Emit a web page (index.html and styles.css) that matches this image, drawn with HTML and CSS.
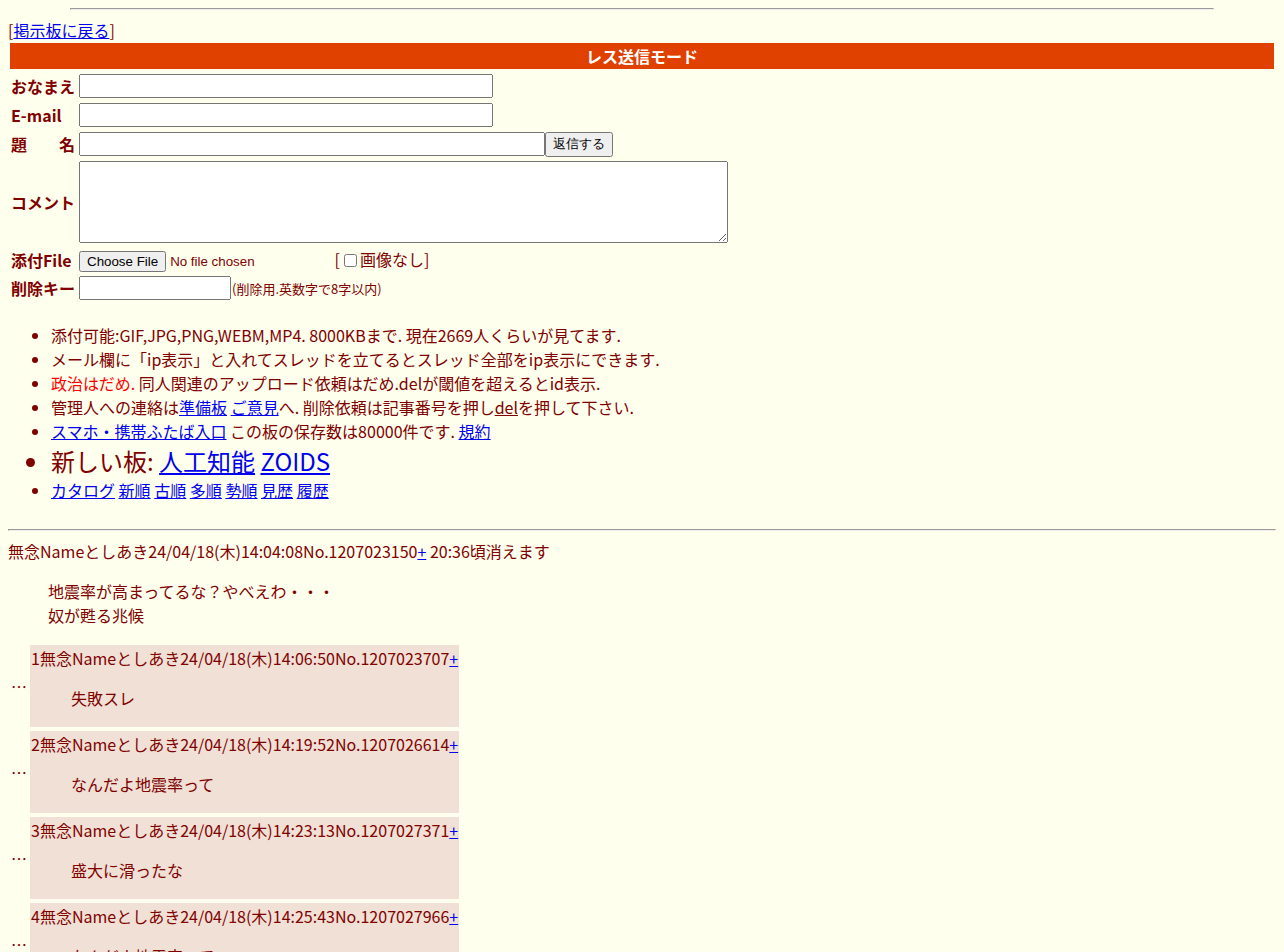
FILE: index.html
```html
<!DOCTYPE html>
<html lang="ja">
<head>
    <meta charset="UTF-8">
    <title>二次元裏＠ふたば</title>
    <link rel="stylesheet" href="styles.css">
</head>
<body>
    <hr class="top-rule">
    <div class="back">[<a href="#">掲示板に戻る</a>]</div>
    <div class="mode-bar">レス送信モード</div>

    <form class="post-form">
        <label class="lbl">おなまえ</label>
        <input type="text" class="txt name-in">

        <label class="lbl">E-mail</label>
        <input type="text" class="txt name-in">

        <label class="lbl">題　　名</label>
        <div class="sub-row">
            <input type="text" class="txt sub-in"><button type="button" class="send-btn">返信する</button>
        </div>

        <label class="lbl">コメント</label>
        <textarea class="com"></textarea>

        <label class="lbl">添付File</label>
        <div class="file-row">
            <input type="file" class="file-in"> [<input type="checkbox" class="noimg">画像なし]
        </div>

        <label class="lbl">削除キー</label>
        <div class="key-row">
            <input type="password" class="txt key-in"><span class="key-note">(削除用.英数字で8字以内)</span>
        </div>
    </form>

    <ul class="rules">
        <li>添付可能:GIF,JPG,PNG,WEBM,MP4. 8000KBまで. 現在2669人くらいが見てます.</li>
        <li>メール欄に「ip表示」と入れてスレッドを立てるとスレッド全部をip表示にできます.</li>
        <li><span class="warn">政治はだめ.</span> 同人関連のアップロード依頼はだめ.delが閾値を超えるとid表示.</li>
        <li>管理人への連絡は<a href="#">準備板</a> <a href="#">ご意見</a>へ. 削除依頼は記事番号を押し<u>del</u>を押して下さい.</li>
        <li><a href="#">スマホ・携帯ふたば入口</a> この板の保存数は80000件です. <a href="#">規約</a></li>
        <li class="big">新しい板: <a href="#">人工知能</a> <a href="#">ZOIDS</a></li>
        <li><a href="#">カタログ</a> <a href="#">新順</a> <a href="#">古順</a> <a href="#">多順</a> <a href="#">勢順</a> <a href="#">見歴</a> <a href="#">履歴</a></li>
    </ul>

    <hr class="sep">

    <div class="thread">
        <div class="post-head">無念Nameとしあき24/04/18(木)14:04:08No.1207023150<a href="#">+</a> 20:36頃消えます</div>
        <blockquote class="body">地震率が高まってるな？やべえわ・・・<br>奴が甦る兆候</blockquote>

        <div class="reply">
            <div class="dots">…</div>
            <div class="rbox">
                <div class="post-head">1無念Nameとしあき24/04/18(木)14:06:50No.1207023707<a href="#">+</a></div>
                <blockquote class="body">失敗スレ</blockquote>
            </div>
        </div>
        <div class="reply">
            <div class="dots">…</div>
            <div class="rbox">
                <div class="post-head">2無念Nameとしあき24/04/18(木)14:19:52No.1207026614<a href="#">+</a></div>
                <blockquote class="body">なんだよ地震率って</blockquote>
            </div>
        </div>
        <div class="reply">
            <div class="dots">…</div>
            <div class="rbox">
                <div class="post-head">3無念Nameとしあき24/04/18(木)14:23:13No.1207027371<a href="#">+</a></div>
                <blockquote class="body">盛大に滑ったな</blockquote>
            </div>
        </div>
        <div class="reply">
            <div class="dots">…</div>
            <div class="rbox">
                <div class="post-head">4無念Nameとしあき24/04/18(木)14:25:43No.1207027966<a href="#">+</a></div>
                <blockquote class="body">なんだよ地震率って</blockquote>
            </div>
        </div>
    </div>
</body>
</html>
```

FILE: styles.css
```css
body {
    font-family: "Noto Sans CJK JP", "Noto Sans", sans-serif;
    font-size: 16px;
    background: #ffffee;
    color: #800000;
    margin: 8px;
}

a {
    color: #0000ee;
}

.top-rule {
    width: 90%;
    margin: 0 auto 8px;
}

.mode-bar {
    background: #e04000;
    color: white;
    font-weight: bold;
    text-align: center;
    height: 26px;
    line-height: 26px;
    margin: 1px 2px 0;
}

.post-form {
    display: grid;
    grid-template-columns: 64px auto;
    grid-template-rows: 24px 24px 24px 82px 23px 24px;
    column-gap: 4px;
    row-gap: 5px;
    align-items: center;
    justify-items: start;
    margin: 5px 0 0 3px;
}

.lbl {
    font-weight: bold;
    white-space: nowrap;
}

.txt {
    box-sizing: border-box;
    height: 24px;
    margin: 0;
}

.name-in {
    width: 414px;
}

.sub-row,
.key-row {
    display: flex;
    align-items: center;
}

.sub-in {
    width: 466px;
}

.send-btn {
    height: 25px;
    margin: 0;
}

.com {
    box-sizing: border-box;
    width: 649px;
    height: 82px;
    margin: 0;
}

.file-in {
    width: 252px;
    color: #800000;
    margin: 0;
}

.noimg {
    margin: 3px 3px 3px 4px;
    vertical-align: -1px;
}

.key-in {
    width: 152px;
}

.key-note {
    font-size: 13px;
    margin-left: 1px;
}

.rules {
    margin: 23px 0 27px;
    padding-left: 43px;
}

.rules .big {
    font-size: 24px;
}

.warn {
    color: #ff0000;
}

.sep {
    margin: 8px 0;
}

.body {
    margin: 16px 40px;
}

.reply {
    display: flex;
    align-items: center;
    gap: 2px;
    padding: 2px;
}

.dots {
    padding: 1px;
    width: 16px;
}

.rbox {
    background: #f0e0d6;
    padding: 1px;
}
```
